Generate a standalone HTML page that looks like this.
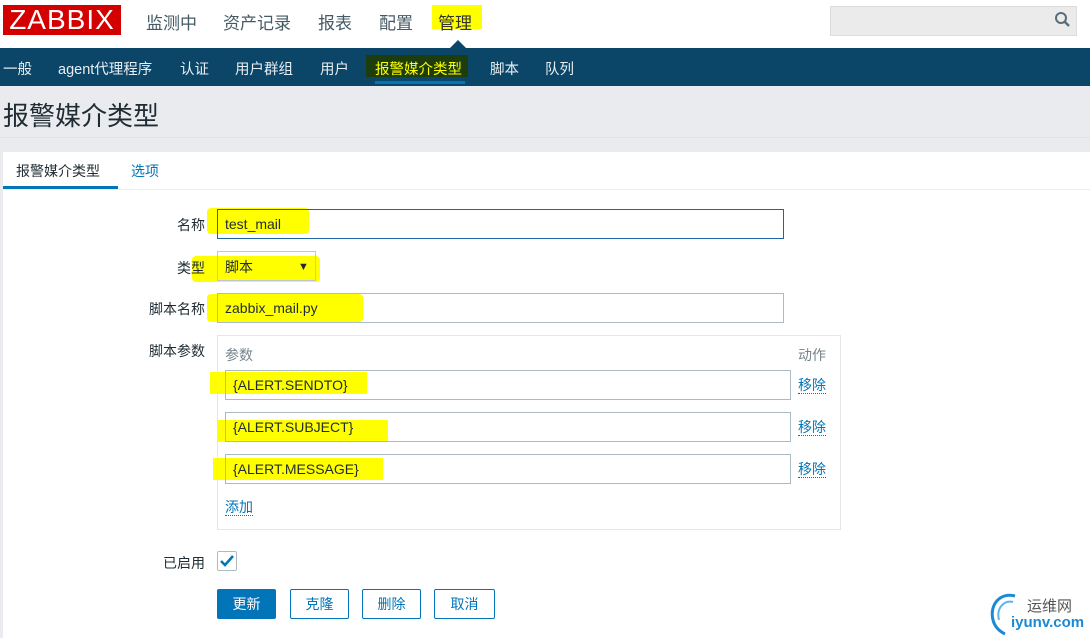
<!DOCTYPE html>
<html><head><meta charset="utf-8"><style>
*{margin:0;padding:0;box-sizing:border-box}
body{width:1090px;height:638px;background:#e9ebee;font-family:"Liberation Sans","Noto Sans CJK SC",sans-serif;position:relative;overflow:hidden;color:#1f2c33}
.a{position:absolute}
.top{left:0;top:0;width:1090px;height:48px;background:#fff}
.logo{left:3px;top:5px;width:118px;height:30px;background:#d40000;color:#fff;font-size:28px;line-height:30px;text-align:center;letter-spacing:1px}
.tn{top:9px;font-size:17px;color:#455a64}
.nav{left:0;top:48px;width:1090px;height:38px;background:#0b4668}
.ni{top:58px;font-size:14.5px;color:#e8eef2}
.panel{left:3px;top:152px;width:1087px;height:486px;background:#fff}
.lbl{font-size:14px;text-align:right;width:120px;left:85px}
.inp{border:1px solid #acbbc3;background:#fff;font-size:14px;padding-left:7px}
.hl{background:#ffff00}
.lk{color:#0275b8;font-size:14px;border-bottom:1px dotted #0275b8;line-height:16px}
.btn{top:589px;height:30px;width:59px;border:1px solid #0275b8;border-radius:2px;color:#0275b8;font-size:14px;text-align:center;line-height:28px;background:#fff}
</style></head><body>
<div class="a top"></div>
<div class="a logo">ZABBIX</div>
<div class="a tn" style="left:146px">监测中</div>
<div class="a tn" style="left:223px">资产记录</div>
<div class="a tn" style="left:318px">报表</div>
<div class="a tn" style="left:379px">配置</div>
<div class="a hl" style="left:432px;top:5px;width:50px;height:24px"></div>
<div class="a tn" style="left:438px;color:#333">管理</div>
<div class="a" style="left:450px;top:40px;width:0;height:0;border-left:8px solid transparent;border-right:8px solid transparent;border-bottom:8px solid #0b4668"></div>
<div class="a" style="left:830px;top:6px;width:247px;height:30px;background:#ebebeb;border:1px solid #dcdcdc"></div>
<svg class="a" style="left:1054px;top:11px" width="18" height="18" viewBox="0 0 18 18"><circle cx="7" cy="7" r="5" fill="none" stroke="#5a6d78" stroke-width="2"/><path d="M10.5 10.5L15 15" stroke="#5a6d78" stroke-width="2.5"/></svg>
<div class="a nav"></div>
<div class="a ni" style="left:3px">一般</div>
<div class="a ni" style="left:58px">agent代理程序</div>
<div class="a ni" style="left:180px">认证</div>
<div class="a ni" style="left:235px">用户群组</div>
<div class="a ni" style="left:320px">用户</div>
<div class="a" style="left:366px;top:55px;width:102px;height:22px;background:#1e3d0c"></div>
<div class="a ni" style="left:375px;color:#ffff00">报警媒介类型</div>
<div class="a" style="left:375px;top:81px;width:90px;height:3px;background:#0275b8"></div>
<div class="a ni" style="left:490px">脚本</div>
<div class="a ni" style="left:545px">队列</div>
<div class="a" style="left:3px;top:96px;font-size:26px;color:#1f2c33">报警媒介类型</div>
<div class="a" style="left:0;top:137px;width:1090px;height:1px;background:#dfe4e7"></div>
<div class="a panel"></div>
<div class="a" style="left:16px;top:161px;font-size:14px">报警媒介类型</div>
<div class="a" style="left:131px;top:161px;font-size:14px;color:#0275b8">选项</div>
<div class="a" style="left:3px;top:186px;width:115px;height:3px;background:#0275b8"></div>
<div class="a" style="left:3px;top:189px;width:1087px;height:1px;background:#ebeef0"></div>

<div class="a hl" style="left:207px;top:208px;width:102px;height:26px;border-radius:4px"></div>
<div class="a hl" style="left:192px;top:256px;width:128px;height:26px;border-radius:4px"></div>
<div class="a hl" style="left:207px;top:294px;width:156px;height:28px;border-radius:4px"></div>

<div class="a lbl" style="top:215px">名称</div>
<div class="a inp" style="left:217px;top:209px;width:567px;height:30px;border-color:#1f65a6;background:transparent;line-height:28px">test_mail</div>
<div class="a lbl" style="top:258px">类型</div>
<div class="a inp" style="left:217px;top:251px;width:99px;height:30px;background:transparent;line-height:30px;border-color:#c0c8cc">脚本<span style="position:absolute;left:80px;font-size:11px">▼</span></div>
<div class="a lbl" style="top:299px">脚本名称</div>
<div class="a inp" style="left:217px;top:293px;width:567px;height:30px;background:transparent;line-height:28px">zabbix_mail.py</div>
<div class="a lbl" style="top:341px">脚本参数</div>
<div class="a" style="left:217px;top:335px;width:624px;height:195px;border:1px solid #e4e6e8"></div>
<div class="a" style="left:225px;top:345px;font-size:14px;color:#76858d">参数</div>
<div class="a" style="left:798px;top:345px;font-size:14px;color:#76858d">动作</div>

<div class="a hl" style="left:210px;top:372px;width:157px;height:22px"></div>
<div class="a hl" style="left:217px;top:420px;width:171px;height:22px"></div>
<div class="a hl" style="left:213px;top:458px;width:170px;height:22px"></div>
<div class="a inp" style="left:225px;top:370px;width:566px;height:30px;line-height:28px;background:transparent">{ALERT.SENDTO}</div>
<div class="a inp" style="left:225px;top:412px;width:566px;height:30px;line-height:28px;background:transparent">{ALERT.SUBJECT}</div>
<div class="a inp" style="left:225px;top:454px;width:566px;height:30px;line-height:28px;background:transparent">{ALERT.MESSAGE}</div>
<div class="a lk" style="left:798px;top:377px">移除</div>
<div class="a lk" style="left:798px;top:419px">移除</div>
<div class="a lk" style="left:798px;top:461px">移除</div>
<div class="a lk" style="left:225px;top:499px">添加</div>

<div class="a lbl" style="top:553px">已启用</div>
<div class="a" style="left:217px;top:551px;width:20px;height:20px;border:1px solid #acbbc3;border-radius:2px"></div>
<svg class="a" style="left:219px;top:554px" width="16" height="14"><path d="M2 7L6 11L14 2" fill="none" stroke="#0275b8" stroke-width="2.5"/></svg>

<div class="a btn" style="left:217px;background:#0275b8;color:#fff">更新</div>
<div class="a btn" style="left:290px">克隆</div>
<div class="a btn" style="left:362px">删除</div>
<div class="a btn" style="left:434px;width:61px">取消</div>

<svg class="a" style="left:985px;top:590px" width="40" height="46"><path d="M30 6C16 2 4 14 8 30C10 38 16 42 20 44" fill="none" stroke="#1a8ad4" stroke-width="3"/><path d="M28 12C19 10 11 18 14 30" fill="none" stroke="#5ab5ea" stroke-width="2"/></svg>
<div class="a" style="left:1027px;top:595px;font-size:15px;color:#555">运维网</div>
<div class="a" style="left:1011px;top:614px;font-size:15px;font-weight:bold;color:#1a8ad4">iyunv.com</div>
</body></html>
